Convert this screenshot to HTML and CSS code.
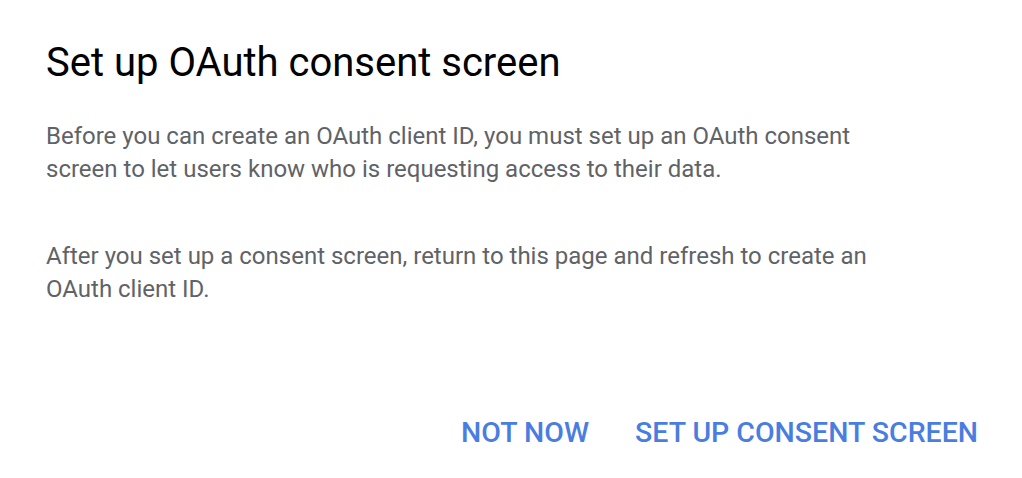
FILE: index.html
```html
<!DOCTYPE html>
<html>
<head>
<meta charset="utf-8">
<link rel="stylesheet" href="styles.css">
</head>
<body>
<div class="dialog">
  <h1 class="title">Set up OAuth consent screen</h1>
  <p class="text">Before you can create an OAuth client ID, you must set up an OAuth consent screen to let users know who is requesting access to their data.</p>
  <p class="text">After you set up a consent screen, return to this page and refresh to create an OAuth client ID.</p>
  <div class="actions">
    <button class="btn">NOT NOW</button>
    <button class="btn">SET UP CONSENT SCREEN</button>
  </div>
</div>
</body>
</html>
```
FILE: styles.css
```css
html, body {
  margin: 0;
  padding: 0;
  background: #fff;
}
body {
  font-family: Roboto, "Liberation Sans", sans-serif;
  width: 1022px;
  height: 478px;
  overflow: hidden;
}
.dialog {
  padding: 38px 44px 0 46px;
  display: flex;
  flex-direction: column;
}
.title {
  margin: 0;
  font-size: 40px;
  font-weight: 400;
  line-height: 50px;
  color: #000;
}
.text {
  margin: 0;
  width: 845px;
  font-size: 24px;
  line-height: 33px;
  color: #5f6368;
}
.title + .text {
  margin-top: 32px;
}
.text + .text {
  margin-top: 54px;
}
.actions {
  display: flex;
  justify-content: flex-end;
  gap: 46px;
  margin-top: 111px;
}
.btn {
  border: none;
  background: none;
  padding: 0;
  font-family: Roboto, "Liberation Sans", sans-serif;
  font-weight: 500;
  font-size: 28.5px;
  line-height: 32px;
  color: #4a7de0;
  cursor: pointer;
}
```
